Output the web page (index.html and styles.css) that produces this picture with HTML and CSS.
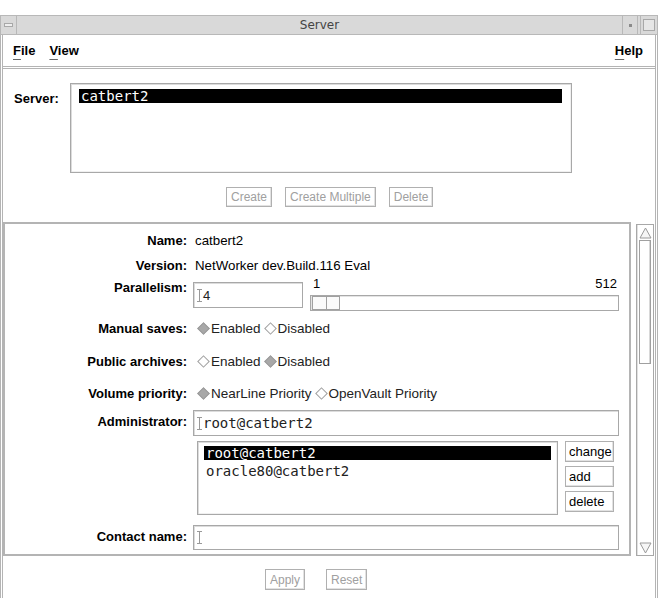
FILE: index.html
```html
<!DOCTYPE html>
<html lang="en">

<head>
    <meta charset="utf-8">
    <title>Server</title>
    <link rel="stylesheet" href="styles.css">
</head>

<body>

    <div class="win">
        <div class="titlebar">
            <span class="tb-btn tb-menu"><i></i></span>
            <span class="tb-title">Server</span>
            <span class="tb-btn tb-min"><i></i></span>
            <span class="tb-btn tb-max"><i></i></span>
        </div>

        <div class="frame">
            <div class="menubar">
                <span class="mi"><u>F</u>ile</span>
                <span class="mi"><u>V</u>iew</span>
                <span class="mi help"><u>H</u>elp</span>
            </div>

            <div class="server">
                <div class="server-row">
                    <span class="slbl">Server:</span>
                    <div class="listbox big">
                        <div class="sel">catbert2</div>
                    </div>
                </div>
                <div class="btnrow">
                    <button class="btn off">Create</button>
                    <button class="btn off">Create Multiple</button>
                    <button class="btn off">Delete</button>
                </div>
            </div>

            <div class="detail">
                <div class="panel">
                    <div class="row r-name">
                        <span class="lbl">Name:</span>
                        <span class="val">catbert2</span>
                    </div>
                    <div class="row r-version">
                        <span class="lbl">Version:</span>
                        <span class="val">NetWorker dev.Build.116 Eval</span>
                    </div>
                    <div class="row r-para">
                        <span class="lbl">Parallelism:</span>
                        <div class="field small"><span class="ibeam"></span><span class="txt sans">4</span></div>
                        <div class="slider">
                            <div class="scale"><span>1</span><span>512</span></div>
                            <div class="trough"><div class="knob"></div></div>
                        </div>
                    </div>
                    <div class="row r-manual">
                        <span class="lbl">Manual saves:</span>
                        <div class="radios">
                            <span class="opt"><span class="dia on"></span>Enabled</span>
                            <span class="opt"><span class="dia"></span>Disabled</span>
                        </div>
                    </div>
                    <div class="row r-public">
                        <span class="lbl">Public archives:</span>
                        <div class="radios">
                            <span class="opt"><span class="dia"></span>Enabled</span>
                            <span class="opt"><span class="dia on"></span>Disabled</span>
                        </div>
                    </div>
                    <div class="row r-volume">
                        <span class="lbl">Volume priority:</span>
                        <div class="radios">
                            <span class="opt"><span class="dia on"></span>NearLine Priority</span>
                            <span class="opt"><span class="dia"></span>OpenVault Priority</span>
                        </div>
                    </div>
                    <div class="row r-admin">
                        <span class="lbl">Administrator:</span>
                        <div class="field wide"><span class="ibeam"></span><span class="txt">root@catbert2</span></div>
                    </div>
                    <div class="row r-list">
                        <span class="lbl"></span>
                        <div class="listbox admins">
                            <div class="sel">root@catbert2</div>
                            <div class="item">oracle80@catbert2</div>
                        </div>
                        <div class="sidebtns">
                            <button class="btn side">change</button>
                            <button class="btn side">add</button>
                            <button class="btn side">delete</button>
                        </div>
                    </div>
                    <div class="row r-contact">
                        <span class="lbl">Contact name:</span>
                        <div class="field wide"><span class="ibeam"></span></div>
                    </div>
                </div>

                <div class="vscroll">
                    <div class="arrow">
                        <svg width="13" height="12" viewBox="0 0 13 12"><polygon points="6.5,1 12,11 1,11" fill="#f6f6f6" stroke="#9a9a9a" /></svg>
                    </div>
                    <div class="strough"><div class="thumb"></div></div>
                    <div class="arrow">
                        <svg width="13" height="12" viewBox="0 0 13 12"><polygon points="1,1 12,1 6.5,11" fill="#f6f6f6" stroke="#9a9a9a" /></svg>
                    </div>
                </div>
            </div>

            <div class="footer">
                <button class="btn off">Apply</button>
                <button class="btn off">Reset</button>
            </div>
        </div>
    </div>

</body>

</html>
```

FILE: styles.css
```css
* {
    box-sizing: border-box;
}

body {
    margin: 0;
    padding: 0;
    background: #fff;
    color: #000;
    font-family: "Liberation Sans", Arial, sans-serif;
    font-size: 13px;
}

.win {
    margin-top: 15px;
    width: 658px;
}

/* title bar */
.titlebar {
    display: flex;
    align-items: center;
    height: 20px;
    background: #d9d9d9;
    border: 1px solid #b8b8b8;
}

.tb-btn {
    height: 18px;
    display: flex;
    align-items: center;
    justify-content: center;
}

.tb-btn i {
    display: block;
}

.tb-menu {
    width: 16px;
    border-right: 1px solid #b8b8b8;
}

.tb-menu i {
    width: 9px;
    height: 4px;
    border: 1px solid #a8a8a8;
    background: #eee;
}

.tb-title {
    flex: 1;
    text-align: center;
    font-family: "DejaVu Sans", sans-serif;
    font-size: 12px;
    color: #444;
}

.tb-min {
    width: 16px;
    border-left: 1px solid #b8b8b8;
    border-right: 1px solid #b8b8b8;
}

.tb-min i {
    width: 3px;
    height: 3px;
    background: #8a8a8a;
}

.tb-max {
    width: 17px;
    margin-left: 2px;
    border-left: 1px solid #b8b8b8;
}

.tb-max i {
    width: 12px;
    height: 12px;
    border: 1px solid #a8a8a8;
    background: #e6e6e6;
}

.frame {
    border-left: 3px double #b4b4b4;
    border-right: 3px double #b4b4b4;
}

/* menu */
.menubar {
    display: flex;
    align-items: center;
    height: 34px;
    padding: 0 12px 0 10px;
    gap: 14px;
    border-bottom: 3px double #b4b4b4;
    font-weight: bold;
    font-size: 13px;
}

.menubar u {
    text-underline-offset: 4px;
    text-decoration-color: #666;
}

.help {
    margin-left: auto;
}

/* server list */
.server {
    padding: 14px 0 15px 11px;
}

.server-row {
    display: flex;
}

.slbl {
    width: 56px;
    padding-top: 8px;
    font-weight: bold;
}

.listbox {
    background: #fff;
    border: 1px solid #a8a8a8;
    box-shadow: inset 1px 1px 0 #dcdcdc, inset -1px -1px 0 #f0f0f0;
}

.big {
    width: 502px;
    height: 90px;
    padding: 5px 9px 0 8px;
}

.sel,
.item {
    font-family: "DejaVu Sans Mono", "Liberation Mono", monospace;
    font-size: 14px;
    line-height: 14px;
    height: 14px;
    padding-left: 2px;
}

.sel {
    background: #000;
    color: #fff;
}

.item {
    margin-top: 4px;
    color: #222;
}

.btnrow {
    display: flex;
    gap: 13px;
    margin-top: 14px;
    padding-left: 212px;
}

.btn {
    height: 20px;
    padding: 0 4px;
    background: #fff;
    border: 1px solid #b0b0b0;
    box-shadow: inset -1px -1px 0 #e2e2e2;
    font-family: "Liberation Sans", Arial, sans-serif;
    font-size: 12px;
    color: #000;
}

.off {
    color: #a0a0a0;
}

/* detail panel */
.detail {
    display: flex;
    height: 334px;
}

.panel {
    width: 628px;
    border: 2px solid #b4b4b4;
}

.row {
    display: flex;
    align-items: center;
}

.lbl {
    flex-shrink: 0;
    width: 182px;
    margin-right: 6px;
    text-align: right;
    font-weight: bold;
}

.val {
    padding-left: 2px;
    font-size: 13.3px;
}

.r-name {
    margin-top: 5px;
    height: 23px;
}

.r-version {
    margin-top: 1px;
    height: 24px;
}

.r-para {
    margin-top: 0;
    height: 34px;
    align-items: flex-start;
}

.r-para .lbl {
    margin-top: 3px;
}

.field {
    display: flex;
    align-items: center;
    height: 26px;
    padding-left: 3px;
    border: 1px solid #a8a8a8;
    box-shadow: inset 1px 1px 0 #dcdcdc;
    background: #fff;
}

.small {
    width: 110px;
    margin-top: 5px;
}

.wide {
    width: 426px;
}

.ibeam {
    width: 5px;
    height: 13px;
    margin-right: 1px;
    border-top: 1px solid #999;
    border-bottom: 1px solid #999;
    background: linear-gradient(#999, #999) center / 1px 100% no-repeat;
}

.txt {
    font-family: "DejaVu Sans Mono", "Liberation Mono", monospace;
    font-size: 14px;
    color: #222;
}

.txt.sans {
    font-family: "Liberation Sans", Arial, sans-serif;
    font-size: 13px;
}

.slider {
    width: 309px;
    margin-left: 7px;
}

.scale {
    display: flex;
    justify-content: space-between;
    height: 18px;
    padding: 0 2px 0 3px;
    line-height: 14px;
}

.trough {
    height: 16px;
    padding: 0 1px;
    border: 1px solid #a8a8a8;
    box-shadow: inset 1px 1px 0 #e4e4e4;
}

.knob {
    width: 28px;
    height: 14px;
    border: 1px solid #a0a0a0;
    background: linear-gradient(#a0a0a0, #a0a0a0) center / 1px 100% no-repeat, #fafafa;
}

.r-manual {
    margin-top: 5px;
    height: 24px;
}

.r-public {
    margin-top: 9px;
    height: 24px;
}

.r-volume {
    margin-top: 8px;
    height: 24px;
}

.radios {
    display: flex;
    gap: 2px;
    padding-left: 3px;
    color: #222;
    font-size: 13.5px;
}

.opt {
    display: inline-flex;
    align-items: center;
}

.dia {
    width: 9px;
    height: 9px;
    margin: 0 3px 0 3px;
    transform: rotate(45deg);
    border: 1px solid #a0a0a0;
    background: #fff;
}

.dia.on {
    background: #a8a8a8;
    border-color: #9a9a9a;
}

.r-admin {
    margin-top: 5px;
    height: 26px;
}

.r-admin .lbl,
.r-contact .lbl {
    padding-bottom: 3px;
}

.r-list {
    margin-top: 5px;
    align-items: flex-start;
}

.admins {
    width: 361px;
    height: 74px;
    margin-left: 4px;
    padding: 4px 6px 0;
}

.sidebtns {
    display: flex;
    flex-direction: column;
    gap: 4px;
    margin-left: 7px;
}

.side {
    width: 49px;
    height: 21px;
    padding: 0 3px;
    text-align: left;
    font-size: 13px;
}

.r-contact {
    margin-top: 10px;
    height: 25px;
}

.r-contact .field {
    height: 25px;
}

/* scrollbar */
.vscroll {
    display: flex;
    flex-direction: column;
    width: 18px;
    margin-left: 5px;
    margin-top: 2px;
    border: 1px solid #a8a8a8;
    box-shadow: inset 1px 0 0 #e0e0e0;
}

.arrow {
    display: flex;
    justify-content: center;
    align-items: center;
    height: 15px;
}

.strough {
    flex: 1;
    padding: 0 2px;
}

.thumb {
    height: 124px;
    border: 1px solid #a0a0a0;
    box-shadow: inset -1px 0 0 #d8d8d8;
}

/* footer */
.footer {
    display: flex;
    gap: 21px;
    height: 42px;
    padding: 13px 0 0 262px;
}

.footer .btn {
    height: 21px;
}
```
